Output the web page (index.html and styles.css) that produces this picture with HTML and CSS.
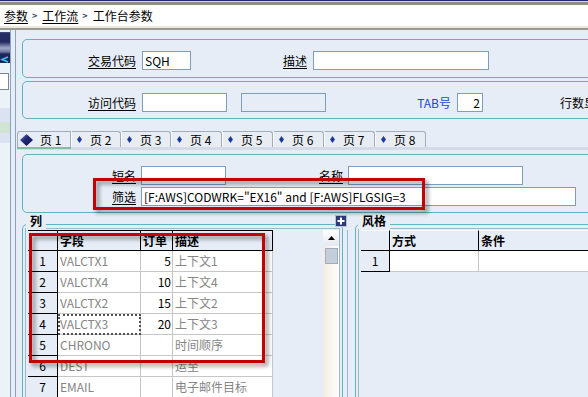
FILE: index.html
```html
<!DOCTYPE html>
<html lang="zh-CN">
<head>
<meta charset="utf-8">
<title>工作台参数</title>
<link rel="stylesheet" href="styles.css">
</head>
<body>
<header class="crumbs">
  <a class="crumb link">参数</a><span class="sep">&gt;</span><a class="crumb link">工作流</a><span class="sep">&gt;</span><span class="crumb">工作台参数</span>
</header>
<div class="workspace">
  <aside class="side">
    <div class="side-head">
      <svg class="side-arrow" width="9" height="7" viewBox="0 0 9 7"><path d="M8 1 L2 3.5 L8 6" fill="none" stroke="#39C3F2" stroke-width="1.6"/></svg>
    </div>
    <div class="side-box"></div>
    <div class="side-lav"></div>
    <div class="side-green"></div>
    <div class="side-lav short"></div>
  </aside>
  <div class="side-gap"></div>
  <main class="main">
    <section class="box box-a">
      <span class="lbl w113">交易代码</span><input class="inp w49" value="SQH" readonly>
      <span class="lbl w116">描述</span><input class="inp w176" value="" readonly>
    </section>
    <section class="box box-b">
      <span class="lbl w113">访问代码</span><input class="inp w85" value="" readonly>
      <input class="inp w85 off" value="" readonly>
      <span class="lbl plain blue w125">TAB号</span><input class="inp w26 right" value="2" readonly>
      <span class="lbl plain more">行数显示</span>
    </section>

    <nav class="tabs">
      <div class="tab active">
        <svg class="dia-big" width="13" height="12" viewBox="0 0 13 12"><defs><linearGradient id="dg" x1="0" y1="0" x2="1" y2="1"><stop offset="0" stop-color="#9098D0"/><stop offset=".4" stop-color="#222C78"/><stop offset="1" stop-color="#0C124A"/></linearGradient></defs><polygon points="6.5,0 13,6 6.5,12 0,6" fill="url(#dg)"/></svg>
        <span>页 1</span>
      </div>
      <div class="tab w50"><svg class="dia" width="5" height="7" viewBox="0 0 5 7"><polygon points="2.5,0 5,3.5 2.5,7 0,3.5" fill="#1B3A9C"/></svg><span>页 2</span></div>
      <div class="tab w50"><svg class="dia" width="5" height="7" viewBox="0 0 5 7"><polygon points="2.5,0 5,3.5 2.5,7 0,3.5" fill="#1B3A9C"/></svg><span>页 3</span></div>
      <div class="tab"><svg class="dia" width="5" height="7" viewBox="0 0 5 7"><polygon points="2.5,0 5,3.5 2.5,7 0,3.5" fill="#1B3A9C"/></svg><span>页 4</span></div>
      <div class="tab"><svg class="dia" width="5" height="7" viewBox="0 0 5 7"><polygon points="2.5,0 5,3.5 2.5,7 0,3.5" fill="#1B3A9C"/></svg><span>页 5</span></div>
      <div class="tab"><svg class="dia" width="5" height="7" viewBox="0 0 5 7"><polygon points="2.5,0 5,3.5 2.5,7 0,3.5" fill="#1B3A9C"/></svg><span>页 6</span></div>
      <div class="tab"><svg class="dia" width="5" height="7" viewBox="0 0 5 7"><polygon points="2.5,0 5,3.5 2.5,7 0,3.5" fill="#1B3A9C"/></svg><span>页 7</span></div>
      <div class="tab"><svg class="dia" width="5" height="7" viewBox="0 0 5 7"><polygon points="2.5,0 5,3.5 2.5,7 0,3.5" fill="#1B3A9C"/></svg><span>页 8</span></div>
    </nav>
    <div class="tabbar"></div>

    <section class="box box-c">
      <div class="frow">
        <span class="lbl w113">短名</span><input class="inp n w85" value="" readonly>
        <span class="lbl w117">名称</span><input class="inp n w175" value="" readonly>
      </div>
      <div class="frow second">
        <span class="lbl w113">筛选</span><input class="inp n w435" value='[F:AWS]CODWRK="EX16" and [F:AWS]FLGSIG=3' readonly>
      </div>
    </section>

    <div class="lower">
      <div class="grp grp-cols">
        <span class="grp-title">列</span>
        <div class="frame">
          <div class="gridarea">
            <div class="row cols hdr">
              <div class="c rh"></div><div class="c">字段</div><div class="c">订单</div><div class="c">描述</div>
            </div>
            <div class="row cols"><div class="c rh">1</div><div class="c">VALCTX1</div><div class="c num">5</div><div class="c">上下文1</div></div>
            <div class="row cols"><div class="c rh">2</div><div class="c">VALCTX4</div><div class="c num">10</div><div class="c">上下文4</div></div>
            <div class="row cols"><div class="c rh">3</div><div class="c">VALCTX2</div><div class="c num">15</div><div class="c">上下文2</div></div>
            <div class="row cols"><div class="c rh">4</div><div class="c focus">VALCTX3</div><div class="c num">20</div><div class="c">上下文3</div></div>
            <div class="row cols"><div class="c rh">5</div><div class="c">CHRONO</div><div class="c num"></div><div class="c">时间顺序</div></div>
            <div class="row cols"><div class="c rh">6</div><div class="c">DEST</div><div class="c num"></div><div class="c">运至</div></div>
            <div class="row cols"><div class="c rh">7</div><div class="c">EMAIL</div><div class="c num"></div><div class="c">电子邮件目标</div></div>
          </div>
          <div class="vscroll">
            <div class="vs-btn"><svg width="7" height="4" viewBox="0 0 7 4"><polygon points="3.5,0 7,4 0,4" fill="#000"/></svg></div>
            <div class="vs-thumb"></div>
          </div>
        </div>
      </div>
      <div class="split"></div>
      <div class="grp grp-style">
        <span class="grp-title">风格</span>
        <div class="frame">
          <div class="gridarea">
            <div class="row sty hdr light">
              <div class="c rh"></div><div class="c">方式</div><div class="c">条件</div>
            </div>
            <div class="row sty"><div class="c rh">1</div><div class="c"></div><div class="c"></div></div>
          </div>
        </div>
      </div>
      <button class="plus" type="button" aria-label="添加">
        <svg width="12" height="12" viewBox="0 0 12 12"><rect x=".5" y=".5" width="11" height="11" fill="#2D397A" stroke="#B9C0D6"/><path d="M6 2.5v7M2.5 6h7" stroke="#fff" stroke-width="2"/></svg>
      </button>
    </div>
  </main>
</div>

<div class="mark mark-filter"></div>
<div class="mark mark-grid"></div>
</body>
</html>
```

FILE: styles.css
```css
* { box-sizing: border-box; }
html, body { margin: 0; padding: 0; }
body {
  width: 588px;
  height: 397px;
  overflow: hidden;
  position: relative;
  background: #E6EDF7;
  font-family: "Noto Sans CJK SC", "DejaVu Sans", sans-serif;
  font-size: 12px;
  line-height: 16px;
  color: #000;
}

/* breadcrumb */
.crumbs {
  height: 30px;
  background: #fff;
  border-top: 1px solid #1C2A6C;
  border-bottom: 2px solid #9A9A92;
  box-shadow: inset 0 1px 0 #D8D8D0, inset 0 4px 0 #8E8E86, inset 0 -2px 0 #EEE9DD;
  padding: 4px 0 2px 4px;
  display: flex;
  align-items: center;
  line-height: 21px;
  white-space: nowrap;
}
.crumb.link { text-decoration: underline; text-underline-offset: 2px; }
.sep { font-size: 9px; margin: 0 5px 0 4px; color: #3C4A70; font-weight: bold; }

.workspace { display: flex; height: 367px; }

/* left side strip */
.side {
  width: 11px;
  flex: none;
  border-right: 1px solid #8CA3BD;
  background: #EDF1F8;
  padding-top: 2px;
}
.side-head {
  height: 31px;
  background: linear-gradient(#454D80 0, #242B60 2px, #242B60 10px, #A3A9CA 16px, #6C729C 20px, #1E255A 22px, #1E255A 31px);
  padding-top: 24px;
}
.side-arrow { display: block; }
.side-box { margin: 10px 1px 0 0; height: 17px; background: #fff; border: 1px solid #7D8590; border-left: none; }
.side-lav { margin-top: 18px; height: 14px; background: #DCE2F2; }
.side-lav.short { margin-top: 0; height: 10px; }
.side-green { height: 11px; background: #D0E4D4; }
.side-gap { width: 4px; flex: none; }

.main {
  flex: none;
  width: 640px;
  border-left: 1px solid #8CA3BD;
  padding: 9px 0 0 1px;
}

/* rounded groups */
.box {
  margin-left: 5px;
  border: 1px solid #5DB5BD;
  border-radius: 5px;
  display: flex;
  align-items: center;
  white-space: nowrap;
}
.box-a { padding: 11px 0 7px; }
.box-b { margin-top: 3px; padding: 11px 0 6px; }
.box-c { display: block; margin-top: 4px; padding: 11px 0 6px; }
.frow { display: flex; align-items: center; height: 19px; }
.frow.second { margin-top: 2px; }

.lbl { flex: none; text-align: right; text-decoration: underline; text-underline-offset: 2px; }
.lbl.plain { text-decoration: none; }
.lbl.blue { color: #1848D8; }
.lbl.more { margin-left: 77px; }
.w113 { width: 113px; }
.w116 { width: 116px; }
.w117 { width: 117px; }
.w125 { width: 125px; }

.inp {
  flex: none;
  height: 19px;
  margin: 0 0 0 6px;
  border: 1px solid #7F9DB9;
  background: #fff;
  padding: 0 2px;
  font: inherit;
  line-height: 17px;
  color: #000;
  outline: none;
}
.inp.n { margin-left: 5px; }
.inp.off { background: #E6EDF7; margin-left: 14px; }
.inp.right { text-align: right; }
.w26 { width: 26px; }
.w49 { width: 49px; }
.w85 { width: 85px; }
.w175 { width: 175px; }
.w176 { width: 176px; }
.w435 { width: 435px; }

/* tabs */
.tabs { display: flex; margin-top: 12px; height: 16px; }
.tab {
  flex: none;
  width: 51px;
  height: 16px;
  border: 1px solid #A3ACBA;
  border-bottom: none;
  border-left-color: #FBFCFE;
  border-radius: 0 3px 0 0;
  background: #E8EDF4;
  display: flex;
  align-items: center;
  padding-left: 5px;
  white-space: nowrap;
  line-height: 14px;
}
.tab.w50 { width: 50px; }
.tab.active {
  width: 54px;
  padding-left: 2px;
  background: #E6EDF7;
  border-left-color: #A3ACBA;
  border-right-color: #A3ACBA;
  border-radius: 3px 0 0 0;
}
.dia-big { flex: none; margin-right: 7px; }
.dia { flex: none; margin-right: 8px; }
.tabbar { height: 3px; background: #D3DBE6; }
.tabbar::before { content: ""; display: block; width: 54px; height: 2px; background: #80BE9F; }

/* lower groups */
.lower { display: flex; margin: 11px 0 0 5px; position: relative; }
.grp {
  position: relative;
  flex: none;
  border: 1px solid #5DB5BD;
  border-radius: 5px;
  padding: 3px 2px 0;
  height: 200px;
}
.grp-cols { width: 321px; }
.grp-style { width: 300px; }
.grp-title {
  position: absolute;
  top: -12px;
  left: 3px;
  padding: 0 4px;
  background: #E6EDF7;
  font-weight: bold;
  line-height: 16px;
}
.grp-style .grp-title { left: 2px; }
.split { flex: none; width: 8px; margin: 6px 0 0 4px; border-left: 1px solid #9DB7CC; }

.frame {
  display: flex;
  height: 190px;
  border: 1px solid #9DB7CC;
  border-bottom: none;
  padding: 1px 0 0 2px;
}
.gridarea { flex: 1; }
.row { display: grid; height: 21px; }
.row.cols { grid-template-columns: 30px 83px 32px 100px; }
.row.sty { grid-template-columns: 29px 89px 200px; }
.c {
  border-right: 1px solid #C6C6C6;
  border-bottom: 1px solid #C6C6C6;
  background: #fff;
  color: #858585;
  padding: 0 2px;
  line-height: 20px;
  white-space: nowrap;
  overflow: hidden;
}
.c.rh { background: transparent; color: #000; text-align: center; border-color: #000; }
.c.num { text-align: right; color: #000; padding-right: 1px; }
.c.focus { outline: 2px dotted #505050; outline-offset: -2px; }
.hdr .c {
  background: transparent;
  color: #000;
  font-weight: bold;
  border-color: #000;
  border-top: 1px solid #000;
  line-height: 19px;
}
.hdr.light .c { border-top-color: #fff; }

.vscroll {
  flex: none;
  width: 16px;
  background: linear-gradient(to right, #F1ECE2, #FFFFFF);
}
.vs-btn {
  height: 16px;
  background: linear-gradient(#FFFFFF, #E4E9F0);
  display: flex;
  align-items: center;
  justify-content: center;
}
.vs-btn svg { display: block; }
.vs-thumb { height: 16px; margin: 2px 1px 0 2px; background: #C4CED9; border: 1px solid #A2ACBA; }

.plus {
  position: absolute;
  left: 313px;
  top: -9px;
  width: 12px;
  height: 12px;
  padding: 0;
  border: 0;
  background: none;
}
.plus svg { display: block; }

/* red annotation frames */
.mark {
  position: absolute;
  border: 3px solid #C40000;
  filter: drop-shadow(3px 3px 2px rgba(0, 0, 0, 0.45));
}
.mark-filter { left: 93px; top: 178px; width: 332px; height: 32px; }
.mark-grid { left: 29px; top: 233px; width: 236px; height: 130px; }
```
